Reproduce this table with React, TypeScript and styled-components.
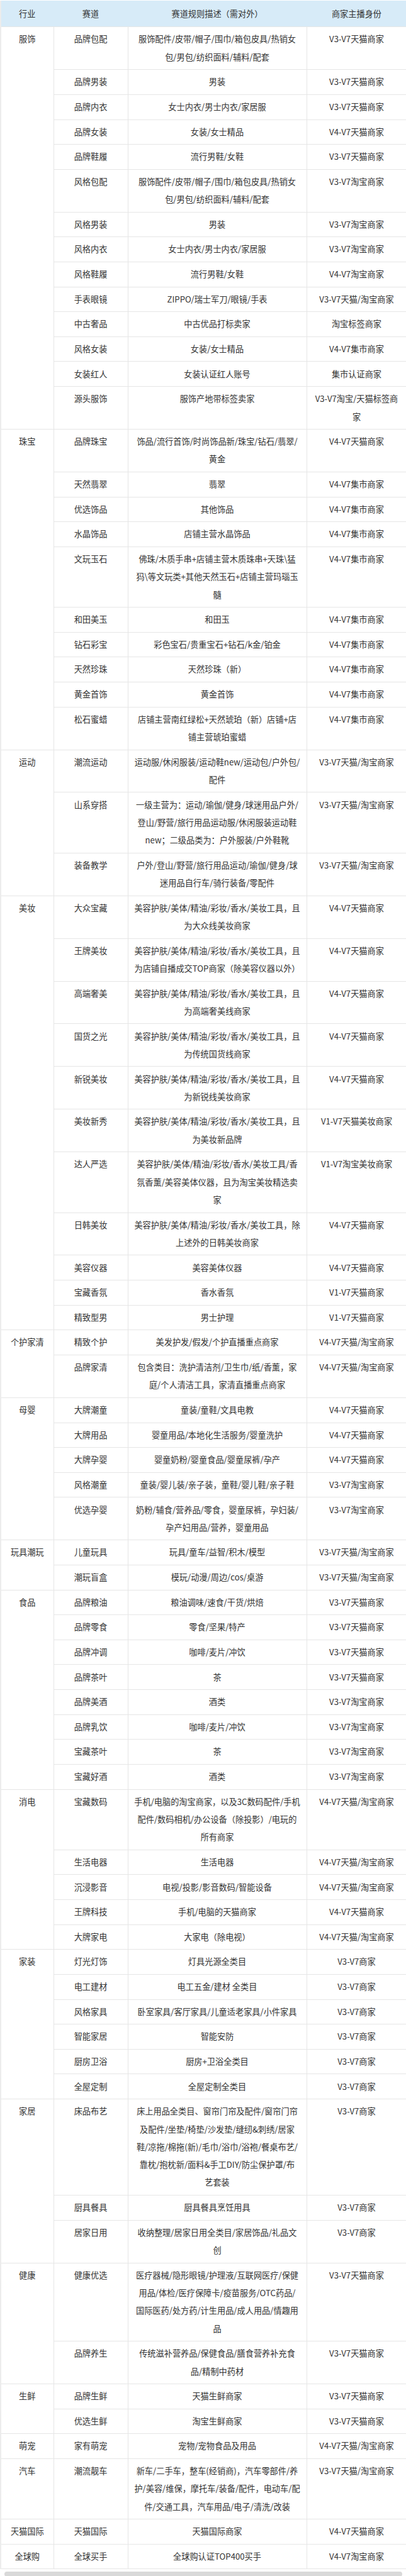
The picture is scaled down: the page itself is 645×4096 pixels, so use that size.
import { Fragment } from "react";
import styled, { createGlobalStyle } from "styled-components";

type Track = [name: string, desc: string, role: string];

interface Industry {
  name: string;
  tracks: Track[];
}

const BEAUTY = "美容护肤/美体/精油/彩妆/香水/美妆工具，且";

const industries: Industry[] = [
  {
    name: "服饰",
    tracks: [
      ["品牌包配", "服饰配件/皮带/帽子/围巾/箱包皮具/热销女\n包/男包/纺织面料/辅料/配套", "V3-V7天猫商家"],
      ["品牌男装", "男装", "V3-V7天猫商家"],
      ["品牌内衣", "女士内衣/男士内衣/家居服", "V3-V7天猫商家"],
      ["品牌女装", "女装/女士精品", "V4-V7天猫商家"],
      ["品牌鞋履", "流行男鞋/女鞋", "V3-V7天猫商家"],
      ["风格包配", "服饰配件/皮带/帽子/围巾/箱包皮具/热销女\n包/男包/纺织面料/辅料/配套", "V3-V7淘宝商家"],
      ["风格男装", "男装", "V3-V7淘宝商家"],
      ["风格内衣", "女士内衣/男士内衣/家居服", "V3-V7淘宝商家"],
      ["风格鞋履", "流行男鞋/女鞋", "V4-V7淘宝商家"],
      ["手表眼镜", "ZIPPO/瑞士军刀/眼镜/手表", "V3-V7天猫/淘宝商家"],
      ["中古奢品", "中古优品打标卖家", "淘宝标签商家"],
      ["风格女装", "女装/女士精品", "V4-V7集市商家"],
      ["女装红人", "女装认证红人账号", "集市认证商家"],
      ["源头服饰", "服饰产地带标签卖家", "V3-V7淘宝/天猫标签商\n家"],
    ],
  },
  {
    name: "珠宝",
    tracks: [
      ["品牌珠宝", "饰品/流行首饰/时尚饰品新/珠宝/钻石/翡翠/\n黄金", "V4-V7天猫商家"],
      ["天然翡翠", "翡翠", "V4-V7集市商家"],
      ["优选饰品", "其他饰品", "V4-V7集市商家"],
      ["水晶饰品", "店铺主营水晶饰品", "V4-V7集市商家"],
      ["文玩玉石", "佛珠/木质手串+店铺主营木质珠串+天珠\\猛\n犸\\等文玩类+其他天然玉石+店铺主营玛瑙玉\n髓", "V4-V7集市商家"],
      ["和田美玉", "和田玉", "V4-V7集市商家"],
      ["钻石彩宝", "彩色宝石/贵重宝石+钻石/k金/铂金", "V4-V7集市商家"],
      ["天然珍珠", "天然珍珠（新）", "V4-V7集市商家"],
      ["黄金首饰", "黄金首饰", "V4-V7集市商家"],
      ["松石蜜蜡", "店铺主营南红绿松+天然琥珀（新）店铺+店\n铺主营琥珀蜜蜡", "V4-V7集市商家"],
    ],
  },
  {
    name: "运动",
    tracks: [
      ["潮流运动", "运动服/休闲服装/运动鞋new/运动包/户外包/\n配件", "V3-V7天猫/淘宝商家"],
      ["山系穿搭", "一级主营为：运动/瑜伽/健身/球迷用品户外/\n登山/野营/旅行用品运动服/休闲服装运动鞋\nnew；二级品类为：户外服装/户外鞋靴", "V3-V7天猫/淘宝商家"],
      ["装备教学", "户外/登山/野营/旅行用品运动/瑜伽/健身/球\n迷用品自行车/骑行装备/零配件", "V3-V7天猫/淘宝商家"],
    ],
  },
  {
    name: "美妆",
    tracks: [
      ["大众宝藏", `${BEAUTY}\n为大众线美妆商家`, "V4-V7天猫商家"],
      ["王牌美妆", `${BEAUTY}\n为店铺自播成交TOP商家（除美容仪器以外）`, "V4-V7天猫商家"],
      ["高端奢美", `${BEAUTY}\n为高端奢美线商家`, "V4-V7天猫商家"],
      ["国货之光", `${BEAUTY}\n为传统国货线商家`, "V4-V7天猫商家"],
      ["新锐美妆", `${BEAUTY}\n为新锐线美妆商家`, "V4-V7天猫商家"],
      ["美妆新秀", `${BEAUTY}\n为美妆新品牌`, "V1-V7天猫美妆商家"],
      ["达人严选", "美容护肤/美体/精油/彩妆/香水/美妆工具/香\n氛香薰/美容美体仪器，且为淘宝美妆精选卖\n家", "V1-V7淘宝美妆商家"],
      ["日韩美妆", "美容护肤/美体/精油/彩妆/香水/美妆工具，除\n上述外的日韩美妆商家", "V4-V7天猫商家"],
      ["美容仪器", "美容美体仪器", "V4-V7天猫商家"],
      ["宝藏香氛", "香水香氛", "V1-V7天猫商家"],
      ["精致型男", "男士护理", "V1-V7天猫商家"],
    ],
  },
  {
    name: "个护家清",
    tracks: [
      ["精致个护", "美发护发/假发/个护直播重点商家", "V4-V7天猫/淘宝商家"],
      ["品牌家清", "包含类目：洗护清洁剂/卫生巾/纸/香薰，家\n庭/个人清洁工具，家清直播重点商家", "V4-V7天猫/淘宝商家"],
    ],
  },
  {
    name: "母婴",
    tracks: [
      ["大牌潮童", "童装/童鞋/文具电教", "V4-V7天猫商家"],
      ["大牌用品", "婴童用品/本地化生活服务/婴童洗护", "V4-V7天猫商家"],
      ["大牌孕婴", "婴童奶粉/婴童食品/婴童尿裤/孕产", "V4-V7天猫商家"],
      ["风格潮童", "童装/婴儿装/亲子装，童鞋/婴儿鞋/亲子鞋", "V3-V7淘宝商家"],
      ["优选孕婴", "奶粉/辅食/营养品/零食，婴童尿裤，孕妇装/\n孕产妇用品/营养，婴童用品", "V3-V7淘宝商家"],
    ],
  },
  {
    name: "玩具潮玩",
    tracks: [
      ["儿童玩具", "玩具/童车/益智/积木/模型", "V3-V7天猫/淘宝商家"],
      ["潮玩盲盒", "模玩/动漫/周边/cos/桌游", "V3-V7天猫/淘宝商家"],
    ],
  },
  {
    name: "食品",
    tracks: [
      ["品牌粮油", "粮油调味/速食/干货/烘焙", "V3-V7天猫商家"],
      ["品牌零食", "零食/坚果/特产", "V3-V7天猫商家"],
      ["品牌冲调", "咖啡/麦片/冲饮", "V3-V7天猫商家"],
      ["品牌茶叶", "茶", "V3-V7天猫商家"],
      ["品牌美酒", "酒类", "V3-V7淘宝商家"],
      ["品牌乳饮", "咖啡/麦片/冲饮", "V3-V7淘宝商家"],
      ["宝藏茶叶", "茶", "V3-V7淘宝商家"],
      ["宝藏好酒", "酒类", "V3-V7淘宝商家"],
    ],
  },
  {
    name: "消电",
    tracks: [
      ["宝藏数码", "手机/电脑的淘宝商家，以及3C数码配件/手机\n配件/数码相机/办公设备（除投影）/电玩的\n所有商家", "V4-V7天猫/淘宝商家"],
      ["生活电器", "生活电器", "V4-V7天猫/淘宝商家"],
      ["沉浸影音", "电视/投影/影音数码/智能设备", "V4-V7天猫/淘宝商家"],
      ["王牌科技", "手机/电脑的天猫商家", "V4-V7天猫商家"],
      ["大牌家电", "大家电（除电视）", "V4-V7天猫/淘宝商家"],
    ],
  },
  {
    name: "家装",
    tracks: [
      ["灯光灯饰", "灯具光源全类目", "V3-V7商家"],
      ["电工建材", "电工五金/建材 全类目", "V3-V7商家"],
      ["风格家具", "卧室家具/客厅家具/儿童适老家具/小件家具", "V3-V7商家"],
      ["智能家居", "智能安防", "V3-V7商家"],
      ["厨房卫浴", "厨房+卫浴全类目", "V3-V7商家"],
      ["全屋定制", "全屋定制全类目", "V3-V7商家"],
    ],
  },
  {
    name: "家居",
    tracks: [
      ["床品布艺", "床上用品全类目、窗帘门帘及配件/窗帘门帘\n及配件/坐垫/椅垫/沙发垫/缝纫&刺绣/居家\n鞋/凉拖/棉拖(新)/毛巾/浴巾/浴袍/餐桌布艺/\n靠枕/抱枕新/面料&手工DIY/防尘保护罩/布\n艺套装", "V3-V7商家"],
      ["厨具餐具", "厨具餐具烹饪用具", "V3-V7商家"],
      ["居家日用", "收纳整理/居家日用全类目/家居饰品/礼品文\n创", "V3-V7商家"],
    ],
  },
  {
    name: "健康",
    tracks: [
      ["健康优选", "医疗器械/隐形眼镜/护理液/互联网医疗/保健\n用品/体检/医疗保障卡/疫苗服务/OTC药品/\n国际医药/处方药/计生用品/成人用品/情趣用\n品", "V3-V7天猫商家"],
      ["品牌养生", "传统滋补营养品/保健食品/膳食营养补充食\n品/精制中药材", "V3-V7天猫商家"],
    ],
  },
  {
    name: "生鲜",
    tracks: [
      ["品牌生鲜", "天猫生鲜商家", "V3-V7天猫商家"],
      ["优选生鲜", "淘宝生鲜商家", "V3-V7天猫商家"],
    ],
  },
  {
    name: "萌宠",
    tracks: [["家有萌宠", "宠物/宠物食品及用品", "V4-V7天猫/淘宝商家"]],
  },
  {
    name: "汽车",
    tracks: [
      ["潮流靓车", "新车/二手车，整车(经销商)，汽车零部件/养\n护/美容/维保，摩托车/装备/配件，电动车/配\n件/交通工具，汽车用品/电子/清洗/改装", "V3-V7天猫/淘宝商家"],
    ],
  },
  {
    name: "天猫国际",
    tracks: [["天猫国际", "天猫国际商家", "V4-V7天猫商家"]],
  },
  {
    name: "全球购",
    tracks: [["全球买手", "全球购认证TOP400买手", "V4-V7淘宝商家"]],
  },
];

const GlobalStyle = createGlobalStyle`
  html, body {
    margin: 0;
    padding: 0;
    background: #fff;
  }
  body {
    font-family: "Noto Sans CJK SC", "Noto Sans", sans-serif;
    color: #333;
  }
`;

const Page = styled.div`
  width: 645px;
  padding-top: 1px;
`;

const Table = styled.table`
  width: 645px;
  table-layout: fixed;
  border-collapse: collapse;
  border-left: 2.5px solid #ececec;
  border-right: 1px solid #e6e6e6;
  font-size: 13.2px;
  line-height: 28.32px;
`;

const HeadCell = styled.th`
  background: #d7ebf8;
  font-weight: normal;
  color: #333;
  padding: 6px 9px;
  text-align: center;
  vertical-align: middle;
  border: 1px solid #d7ebf8;
  border-bottom-color: #e6e6e6;
`;

const Cell = styled.td`
  padding: 5.165px 9.4px;
  border: 1px solid #e6e6e6;
  vertical-align: top;
  text-align: center;
  white-space: pre;
  color: #333;
`;

const Scrollbar = styled.div`
  height: 8px;
  margin: 3.5px 6px 0 6.6px;
  background: #d9d9d9;
  border-radius: 4px;
`;

export default function App() {
  return (
    <Page>
      <GlobalStyle />
      <Table>
        <colgroup>
          <col style={{ width: 84 }} />
          <col style={{ width: 118 }} />
          <col style={{ width: 284 }} />
          <col style={{ width: 159 }} />
        </colgroup>
        <thead>
          <tr>
            <HeadCell>行业</HeadCell>
            <HeadCell>赛道</HeadCell>
            <HeadCell>赛道规则描述（需对外）</HeadCell>
            <HeadCell>商家主播身份</HeadCell>
          </tr>
        </thead>
        <tbody>
          {industries.map((industry) => (
            <Fragment key={industry.name}>
              {industry.tracks.map(([name, desc, role], idx) => (
                <tr key={name + idx}>
                  {idx === 0 && <Cell rowSpan={industry.tracks.length}>{industry.name}</Cell>}
                  <Cell>{name}</Cell>
                  <Cell>{desc}</Cell>
                  <Cell>{role}</Cell>
                </tr>
              ))}
            </Fragment>
          ))}
        </tbody>
      </Table>
      <Scrollbar />
    </Page>
  );
}
